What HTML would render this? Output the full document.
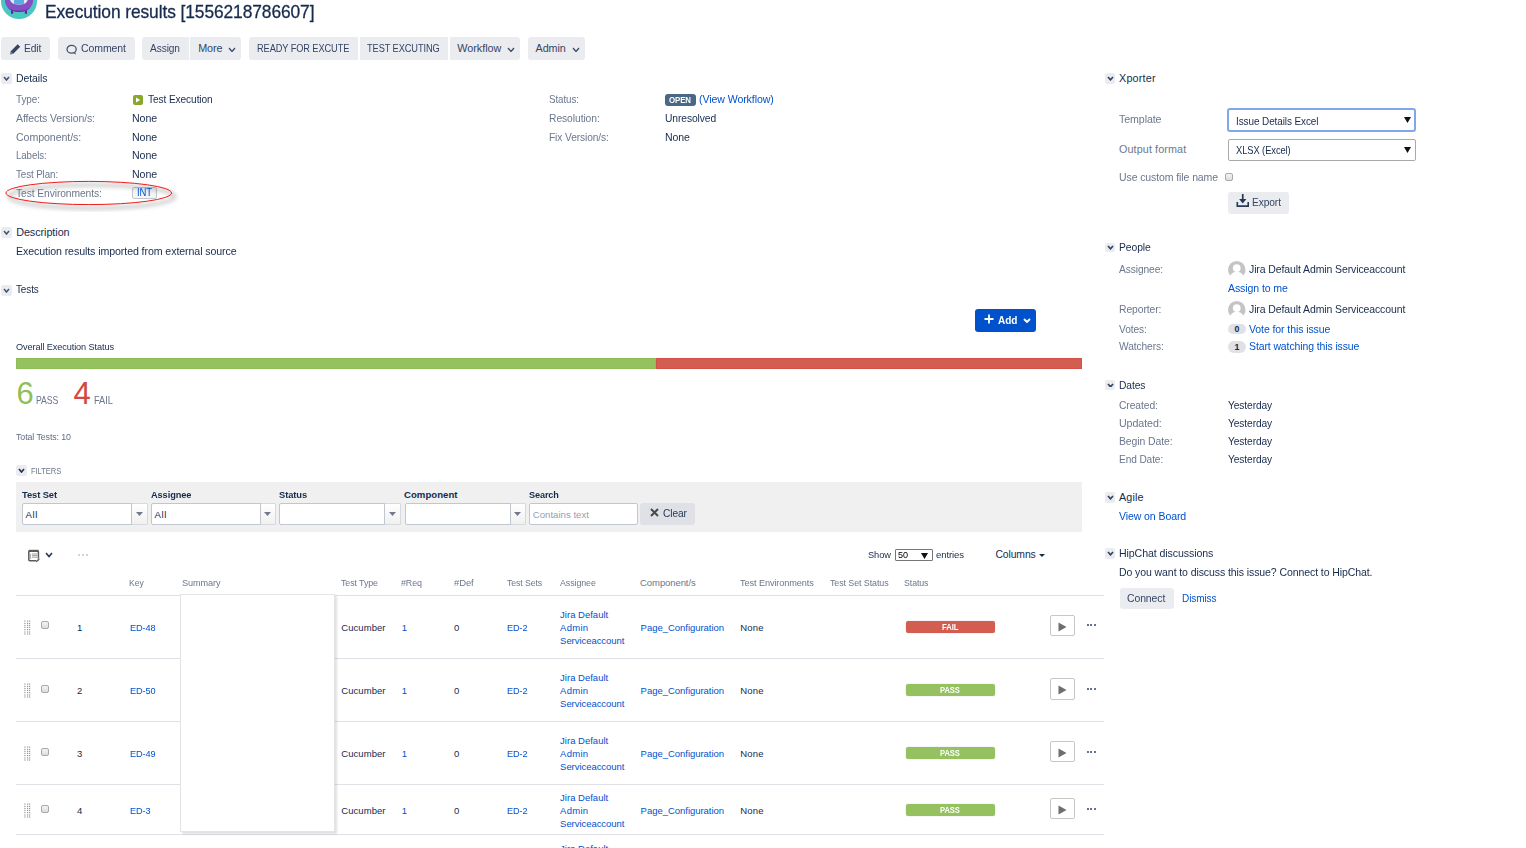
<!DOCTYPE html>
<html><head><meta charset="utf-8"><title>Execution results</title>
<style>
html,body{margin:0;padding:0;background:#fff;width:1526px;height:848px;overflow:hidden;position:relative}
body{font-family:"Liberation Sans",sans-serif}
.t{position:absolute;white-space:nowrap}
</style></head><body>
<svg style="position:absolute;left:0;top:0" width="40" height="22" viewBox="0 0 40 22">
<circle cx="19" cy="1" r="18" fill="#4BC6C3"/>
<path d="M11 9.5 h2.2 v4.3 h-2.2z M24.8 9.5 h2.2 v4.3 h-2.2z" fill="#5B2A9E"/>
<path d="M4.9 0 C5 6.5 9.5 11.9 19 11.9 C28.5 11.9 33 6.5 33.1 0 Z" fill="#8650C4"/>
<path d="M7.5 7.2 C10.5 10.6 14 11.9 19 11.9 C24 11.9 27.5 10.6 30.5 7.2 C27.5 9.6 24 10.6 19 10.6 C14 10.6 10.5 9.6 7.5 7.2Z" fill="#6535A8"/>
<path d="M10 0 C11 3.2 14 4.5 19 4.5 C24 4.5 27 3.2 27.6 0Z" fill="#EAE6F4"/>
<path d="M14 0 L14 3.6 C15.5 4.9 22.5 4.9 24 3.6 L24 0Z" fill="#5AADE2"/>
</svg>
<div style="position:absolute;left:1px;top:37px;width:49px;height:23px;background:#EBECF0;border-radius:3px"></div>
<div style="position:absolute;left:58px;top:37px;width:76.69999999999999px;height:23px;background:#EBECF0;border-radius:3px"></div>
<div style="position:absolute;left:142.2px;top:37px;width:46.80000000000001px;height:23px;background:#EBECF0;border-radius:3px 0 0 3px"></div>
<div style="position:absolute;left:190px;top:37px;width:50.80000000000001px;height:23px;background:#EBECF0;border-radius:0 3px 3px 0"></div>
<div style="position:absolute;left:249.2px;top:37px;width:108.80000000000001px;height:23px;background:#EBECF0;border-radius:3px 0 0 3px"></div>
<div style="position:absolute;left:360px;top:37px;width:87.80000000000001px;height:23px;background:#EBECF0;border-radius:0"></div>
<div style="position:absolute;left:450px;top:37px;width:70px;height:23px;background:#EBECF0;border-radius:0 3px 3px 0"></div>
<div style="position:absolute;left:528px;top:37px;width:57px;height:23px;background:#EBECF0;border-radius:3px"></div>
<svg style="position:absolute;left:9px;top:43px" width="13" height="12" viewBox="0 0 13 12"><path d="M1.5 8.5 L8.7 1.3 L11.2 3.8 L4 11 Z" fill="#344563"/><path d="M1.5 8.5 L4 11 L0.9 11.6 Z" fill="#6B778C"/></svg>
<svg style="position:absolute;left:66px;top:43.6px" width="12" height="12" viewBox="0 0 12 12"><ellipse cx="5.6" cy="5.2" rx="4.6" ry="3.9" fill="none" stroke="#42526E" stroke-width="1.3"/><path d="M7.5 9 L10 10.8 L9.2 8" fill="#42526E"/></svg>
<svg style="position:absolute;left:228px;top:46.5px" width="8" height="5.5" viewBox="0 0 8 5.5"><path d="M1 1 L4.0 4.5 L7 1" fill="none" stroke="#42526E" stroke-width="1.4"/></svg>
<svg style="position:absolute;left:506.5px;top:46.5px" width="8" height="5.5" viewBox="0 0 8 5.5"><path d="M1 1 L4.0 4.5 L7 1" fill="none" stroke="#42526E" stroke-width="1.4"/></svg>
<svg style="position:absolute;left:571.5px;top:46.5px" width="8" height="5.5" viewBox="0 0 8 5.5"><path d="M1 1 L4.0 4.5 L7 1" fill="none" stroke="#42526E" stroke-width="1.4"/></svg>
<div style="position:absolute;left:1.3px;top:73px;width:10.5px;height:11px;background:#EBECF0;border-radius:2px"></div>
<svg style="position:absolute;left:3.3px;top:76.2px" width="7" height="5" viewBox="0 0 7 5"><path d="M1 1 L3.5 4 L6 1" fill="none" stroke="#42526E" stroke-width="1.5"/></svg>
<div style="position:absolute;left:1.2px;top:227px;width:10.5px;height:10.599999999999994px;background:#EBECF0;border-radius:2px"></div>
<svg style="position:absolute;left:3.2px;top:230.0px" width="7" height="5" viewBox="0 0 7 5"><path d="M1 1 L3.5 4 L6 1" fill="none" stroke="#42526E" stroke-width="1.5"/></svg>
<div style="position:absolute;left:1.2px;top:285.3px;width:10.5px;height:10.300000000000011px;background:#EBECF0;border-radius:2px"></div>
<svg style="position:absolute;left:3.2px;top:288.15000000000003px" width="7" height="5" viewBox="0 0 7 5"><path d="M1 1 L3.5 4 L6 1" fill="none" stroke="#42526E" stroke-width="1.5"/></svg>
<div style="position:absolute;left:133px;top:95px;width:10px;height:10px;background:#8AA62C;border-radius:2px"></div>
<svg style="position:absolute;left:133px;top:95px" width="10" height="10" viewBox="0 0 10 10"><path d="M3 2.6 L7.2 5 L3 7.4Z" fill="#fff"/></svg>
<div style="position:absolute;left:132.3px;top:186.9px;width:24.599999999999994px;height:11.799999999999983px;background:#F4F5F7;border:1px solid #C1C7D0;border-radius:2px;box-sizing:border-box"></div>
<div style="position:absolute;left:665px;top:94px;width:30.700000000000045px;height:11.799999999999997px;background:#4A6785;border-radius:3px"></div>
<svg style="position:absolute;left:0;top:176px" width="185" height="36" viewBox="0 0 185 36">
<defs><filter id="sh" x="-10%" y="-30%" width="130%" height="180%"><feGaussianBlur stdDeviation="1.9"/></filter></defs>
<ellipse cx="91.8" cy="20.6" rx="82.8" ry="11.6" fill="none" stroke="rgba(0,0,0,0.28)" stroke-width="2.6" filter="url(#sh)"/>
<ellipse cx="88.75" cy="17" rx="82.8" ry="11.6" fill="none" stroke="#F21C1C" stroke-width="1.0"/>
</svg>
<div style="position:absolute;left:975px;top:309px;width:61px;height:23px;background:#0052CC;border-radius:3px"></div>
<svg style="position:absolute;left:984px;top:313.5px" width="10" height="10" viewBox="0 0 10 10"><path d="M5 0.5 V9.5 M0.5 5 H9.5" stroke="#fff" stroke-width="1.8"/></svg>
<svg style="position:absolute;left:1022.6px;top:317.6px" width="8" height="5.0" viewBox="0 0 8 5.0"><path d="M1 1 L4.0 4.0 L7 1" fill="none" stroke="#fff" stroke-width="1.9"/></svg>
<div style="position:absolute;left:16px;top:358px;width:640px;height:11px;background:#95C160;box-shadow:inset 0 0 0 1px #8DBD55"></div>
<div style="position:absolute;left:656px;top:358px;width:426px;height:11px;background:#D45D52;box-shadow:inset 0 0 0 1px #D2524A"></div>
<div style="position:absolute;left:16.2px;top:465px;width:10.5px;height:10.699999999999989px;background:#EBECF0;border-radius:2px"></div>
<svg style="position:absolute;left:18.4px;top:468.2px" width="7" height="5" viewBox="0 0 7 5"><path d="M1 1 L3.5 4 L6 1" fill="none" stroke="#253858" stroke-width="1.7"/></svg>
<div style="position:absolute;left:16px;top:482px;width:1066px;height:50px;background:#F0F0F0"></div>
<div style="position:absolute;left:21.5px;top:503px;width:126.0px;height:21.5px;background:#fff;border:1px solid #C1C7D0;border-radius:2px;box-sizing:border-box"></div>
<div style="position:absolute;left:130.5px;top:503px;width:17.0px;height:21.5px;background:linear-gradient(#fff,#F0F0F0);border:1px solid #D6D9DF;border-left-color:#C1C7D0;border-radius:0 2px 2px 0;box-sizing:border-box"></div>
<svg style="position:absolute;left:135.5px;top:512px" width="7" height="4" viewBox="0 0 7 4"><path d="M0 0 H7 L3.5 4Z" fill="#707A8A"/></svg>
<div style="position:absolute;left:150.5px;top:503px;width:125.60000000000002px;height:21.5px;background:#fff;border:1px solid #C1C7D0;border-radius:2px;box-sizing:border-box"></div>
<div style="position:absolute;left:259.6px;top:503px;width:16.5px;height:21.5px;background:linear-gradient(#fff,#F0F0F0);border:1px solid #D6D9DF;border-left-color:#C1C7D0;border-radius:0 2px 2px 0;box-sizing:border-box"></div>
<svg style="position:absolute;left:264.35px;top:512px" width="7" height="4" viewBox="0 0 7 4"><path d="M0 0 H7 L3.5 4Z" fill="#707A8A"/></svg>
<div style="position:absolute;left:279.4px;top:503px;width:121.60000000000002px;height:21.5px;background:#fff;border:1px solid #C1C7D0;border-radius:2px;box-sizing:border-box"></div>
<div style="position:absolute;left:384.4px;top:503px;width:16.600000000000023px;height:21.5px;background:linear-gradient(#fff,#F0F0F0);border:1px solid #D6D9DF;border-left-color:#C1C7D0;border-radius:0 2px 2px 0;box-sizing:border-box"></div>
<svg style="position:absolute;left:389.2px;top:512px" width="7" height="4" viewBox="0 0 7 4"><path d="M0 0 H7 L3.5 4Z" fill="#707A8A"/></svg>
<div style="position:absolute;left:404.5px;top:503px;width:121.5px;height:21.5px;background:#fff;border:1px solid #C1C7D0;border-radius:2px;box-sizing:border-box"></div>
<div style="position:absolute;left:509.7px;top:503px;width:16.30000000000001px;height:21.5px;background:linear-gradient(#fff,#F0F0F0);border:1px solid #D6D9DF;border-left-color:#C1C7D0;border-radius:0 2px 2px 0;box-sizing:border-box"></div>
<svg style="position:absolute;left:514.35px;top:512px" width="7" height="4" viewBox="0 0 7 4"><path d="M0 0 H7 L3.5 4Z" fill="#707A8A"/></svg>
<div style="position:absolute;left:529.3px;top:503px;width:109.20000000000005px;height:21.5px;background:#fff;border:1px solid #C1C7D0;border-radius:2px;box-sizing:border-box"></div>
<div style="position:absolute;left:640.3px;top:503.2px;width:54.40000000000009px;height:21.400000000000034px;background:#DFE1E6;border-radius:3px"></div>
<svg style="position:absolute;left:649.5px;top:507.6px" width="9" height="9" viewBox="0 0 9 9"><path d="M1 1 L8 8 M8 1 L1 8" stroke="#4A4A4A" stroke-width="2"/></svg>
<svg style="position:absolute;left:27px;top:549px" width="14" height="14" viewBox="0 0 14 14">
<rect x="1.8" y="1.8" width="9.6" height="10" rx="1" fill="none" stroke="#5A5A5A" stroke-width="1.5"/>
<path d="M1.8 1.9 H11.4" stroke="#5A5A5A" stroke-width="2.2"/>
<path d="M3.6 4.8 V10" stroke="#A0A0A0" stroke-width="0.9"/>
<path d="M5 5 H10 M5 6.6 H10 M5 8.2 H10" stroke="#A0A0A0" stroke-width="1"/>
<path d="M8.2 12.8 L12.2 8.8 L13.2 9.8 L9.2 13.6Z" fill="#fff"/>
<path d="M8.6 12.6 L12.2 9.2 L12.9 9.9 L9.3 13.2Z" fill="#555"/>
</svg>
<svg style="position:absolute;left:45px;top:552px" width="8" height="5.6" viewBox="0 0 8 5.6"><path d="M1 1 L4.0 4.6 L7 1" fill="none" stroke="#253858" stroke-width="1.6"/></svg>
<div style="position:absolute;left:77.5px;top:554px;width:2.0px;height:2px;background:#C1C7D0;border-radius:1px"></div>
<div style="position:absolute;left:81.5px;top:554px;width:2.0px;height:2px;background:#C1C7D0;border-radius:1px"></div>
<div style="position:absolute;left:85.5px;top:554px;width:2.0px;height:2px;background:#C1C7D0;border-radius:1px"></div>
<div style="position:absolute;left:895.1px;top:549.2px;width:37.60000000000002px;height:11.399999999999977px;background:#fff;border:1px solid #777;border-radius:1px;box-sizing:border-box"></div>
<svg style="position:absolute;left:921px;top:552.5px" width="7" height="6" viewBox="0 0 7 6"><path d="M0 0 H7 L3.5 6Z" fill="#111"/></svg>
<svg style="position:absolute;left:1038.9px;top:553.8px" width="6" height="3" viewBox="0 0 6 3"><path d="M0 0 H6 L3 3Z" fill="#172B4D"/></svg>
<div style="position:absolute;left:16px;top:594.6px;width:1088.4px;height:1.6000000000000227px;background:#DFE1E6"></div>
<div style="position:absolute;left:16px;top:657.8px;width:1088.4px;height:1.2000000000000455px;background:#DFE1E6"></div>
<div style="position:absolute;left:16px;top:720.6999999999999px;width:1088.4px;height:1.2000000000000455px;background:#DFE1E6"></div>
<div style="position:absolute;left:16px;top:783.8px;width:1088.4px;height:1.2000000000000455px;background:#DFE1E6"></div>
<div style="position:absolute;left:16px;top:833.9px;width:1088.4px;height:1.2000000000000455px;background:#DFE1E6"></div>
<svg style="position:absolute;left:24px;top:620px" width="7" height="15" viewBox="0 0 7 15" fill="#9A9A9A"><rect x="0.3" y="0.5" width="1.2" height="1.2"/><rect x="0.3" y="2.8" width="1.2" height="1.2"/><rect x="0.3" y="4.8" width="1.2" height="1.2"/><rect x="0.3" y="6.8" width="1.2" height="1.2"/><rect x="0.3" y="9" width="1.2" height="1.2"/><rect x="0.3" y="11.4" width="1.2" height="1.2"/><rect x="0.3" y="13.4" width="1.2" height="1.2"/><rect x="3" y="0.5" width="1.2" height="1.2"/><rect x="3" y="2.8" width="1.2" height="1.2"/><rect x="3" y="4.8" width="1.2" height="1.2"/><rect x="3" y="6.8" width="1.2" height="1.2"/><rect x="3" y="9" width="1.2" height="1.2"/><rect x="3" y="11.4" width="1.2" height="1.2"/><rect x="3" y="13.4" width="1.2" height="1.2"/><rect x="5" y="0.5" width="1.2" height="1.2"/><rect x="5" y="2.8" width="1.2" height="1.2"/><rect x="5" y="4.8" width="1.2" height="1.2"/><rect x="5" y="6.8" width="1.2" height="1.2"/><rect x="5" y="9" width="1.2" height="1.2"/><rect x="5" y="11.4" width="1.2" height="1.2"/><rect x="5" y="13.4" width="1.2" height="1.2"/></svg>
<div style="position:absolute;left:41.1px;top:621.2px;width:7.899999999999999px;height:8.099999999999909px;background:linear-gradient(#F4F4F4,#DDD);border:1px solid #A8A8A8;border-radius:2px;box-sizing:border-box"></div>
<div style="position:absolute;left:906px;top:620.9px;width:89px;height:12.100000000000023px;background:#D45D52;border-radius:2px;box-shadow:0 0 0 0.5px rgba(0,0,0,0.08)"></div>
<div style="position:absolute;left:1050.3px;top:614.8px;width:24.40000000000009px;height:21.40000000000009px;background:#fff;border:1px solid #C8C8C8;border-radius:2px;box-sizing:border-box"></div>
<svg style="position:absolute;left:1058px;top:621.6px" width="9" height="10" viewBox="0 0 9 10"><path d="M0.5 0.5 L8.5 5 L0.5 9.5Z" fill="#6E6E6E"/></svg>
<div style="position:absolute;left:1086.6px;top:624.4px;width:2.0px;height:2.0px;background:#344563;border-radius:1px"></div>
<div style="position:absolute;left:1090.3px;top:624.4px;width:2.0px;height:2.0px;background:#344563;border-radius:1px"></div>
<div style="position:absolute;left:1094.0px;top:624.4px;width:2.0px;height:2.0px;background:#344563;border-radius:1px"></div>
<svg style="position:absolute;left:24px;top:683.4px" width="7" height="15" viewBox="0 0 7 15" fill="#9A9A9A"><rect x="0.3" y="0.5" width="1.2" height="1.2"/><rect x="0.3" y="2.8" width="1.2" height="1.2"/><rect x="0.3" y="4.8" width="1.2" height="1.2"/><rect x="0.3" y="6.8" width="1.2" height="1.2"/><rect x="0.3" y="9" width="1.2" height="1.2"/><rect x="0.3" y="11.4" width="1.2" height="1.2"/><rect x="0.3" y="13.4" width="1.2" height="1.2"/><rect x="3" y="0.5" width="1.2" height="1.2"/><rect x="3" y="2.8" width="1.2" height="1.2"/><rect x="3" y="4.8" width="1.2" height="1.2"/><rect x="3" y="6.8" width="1.2" height="1.2"/><rect x="3" y="9" width="1.2" height="1.2"/><rect x="3" y="11.4" width="1.2" height="1.2"/><rect x="3" y="13.4" width="1.2" height="1.2"/><rect x="5" y="0.5" width="1.2" height="1.2"/><rect x="5" y="2.8" width="1.2" height="1.2"/><rect x="5" y="4.8" width="1.2" height="1.2"/><rect x="5" y="6.8" width="1.2" height="1.2"/><rect x="5" y="9" width="1.2" height="1.2"/><rect x="5" y="11.4" width="1.2" height="1.2"/><rect x="5" y="13.4" width="1.2" height="1.2"/></svg>
<div style="position:absolute;left:41.1px;top:684.6px;width:7.899999999999999px;height:8.099999999999909px;background:linear-gradient(#F4F4F4,#DDD);border:1px solid #A8A8A8;border-radius:2px;box-sizing:border-box"></div>
<div style="position:absolute;left:906px;top:684.3px;width:89px;height:12.100000000000023px;background:#95C160;border-radius:2px;box-shadow:0 0 0 0.5px rgba(0,0,0,0.08)"></div>
<div style="position:absolute;left:1050.3px;top:678.1999999999999px;width:24.40000000000009px;height:21.40000000000009px;background:#fff;border:1px solid #C8C8C8;border-radius:2px;box-sizing:border-box"></div>
<svg style="position:absolute;left:1058px;top:685.0px" width="9" height="10" viewBox="0 0 9 10"><path d="M0.5 0.5 L8.5 5 L0.5 9.5Z" fill="#6E6E6E"/></svg>
<div style="position:absolute;left:1086.6px;top:687.8px;width:2.0px;height:2.0px;background:#344563;border-radius:1px"></div>
<div style="position:absolute;left:1090.3px;top:687.8px;width:2.0px;height:2.0px;background:#344563;border-radius:1px"></div>
<div style="position:absolute;left:1094.0px;top:687.8px;width:2.0px;height:2.0px;background:#344563;border-radius:1px"></div>
<svg style="position:absolute;left:24px;top:746.3px" width="7" height="15" viewBox="0 0 7 15" fill="#9A9A9A"><rect x="0.3" y="0.5" width="1.2" height="1.2"/><rect x="0.3" y="2.8" width="1.2" height="1.2"/><rect x="0.3" y="4.8" width="1.2" height="1.2"/><rect x="0.3" y="6.8" width="1.2" height="1.2"/><rect x="0.3" y="9" width="1.2" height="1.2"/><rect x="0.3" y="11.4" width="1.2" height="1.2"/><rect x="0.3" y="13.4" width="1.2" height="1.2"/><rect x="3" y="0.5" width="1.2" height="1.2"/><rect x="3" y="2.8" width="1.2" height="1.2"/><rect x="3" y="4.8" width="1.2" height="1.2"/><rect x="3" y="6.8" width="1.2" height="1.2"/><rect x="3" y="9" width="1.2" height="1.2"/><rect x="3" y="11.4" width="1.2" height="1.2"/><rect x="3" y="13.4" width="1.2" height="1.2"/><rect x="5" y="0.5" width="1.2" height="1.2"/><rect x="5" y="2.8" width="1.2" height="1.2"/><rect x="5" y="4.8" width="1.2" height="1.2"/><rect x="5" y="6.8" width="1.2" height="1.2"/><rect x="5" y="9" width="1.2" height="1.2"/><rect x="5" y="11.4" width="1.2" height="1.2"/><rect x="5" y="13.4" width="1.2" height="1.2"/></svg>
<div style="position:absolute;left:41.1px;top:747.5px;width:7.899999999999999px;height:8.099999999999909px;background:linear-gradient(#F4F4F4,#DDD);border:1px solid #A8A8A8;border-radius:2px;box-sizing:border-box"></div>
<div style="position:absolute;left:906px;top:747.1999999999999px;width:89px;height:12.100000000000023px;background:#95C160;border-radius:2px;box-shadow:0 0 0 0.5px rgba(0,0,0,0.08)"></div>
<div style="position:absolute;left:1050.3px;top:741.0999999999999px;width:24.40000000000009px;height:21.40000000000009px;background:#fff;border:1px solid #C8C8C8;border-radius:2px;box-sizing:border-box"></div>
<svg style="position:absolute;left:1058px;top:747.9px" width="9" height="10" viewBox="0 0 9 10"><path d="M0.5 0.5 L8.5 5 L0.5 9.5Z" fill="#6E6E6E"/></svg>
<div style="position:absolute;left:1086.6px;top:750.6999999999999px;width:2.0px;height:2.0px;background:#344563;border-radius:1px"></div>
<div style="position:absolute;left:1090.3px;top:750.6999999999999px;width:2.0px;height:2.0px;background:#344563;border-radius:1px"></div>
<div style="position:absolute;left:1094.0px;top:750.6999999999999px;width:2.0px;height:2.0px;background:#344563;border-radius:1px"></div>
<svg style="position:absolute;left:24px;top:803.3px" width="7" height="15" viewBox="0 0 7 15" fill="#9A9A9A"><rect x="0.3" y="0.5" width="1.2" height="1.2"/><rect x="0.3" y="2.8" width="1.2" height="1.2"/><rect x="0.3" y="4.8" width="1.2" height="1.2"/><rect x="0.3" y="6.8" width="1.2" height="1.2"/><rect x="0.3" y="9" width="1.2" height="1.2"/><rect x="0.3" y="11.4" width="1.2" height="1.2"/><rect x="0.3" y="13.4" width="1.2" height="1.2"/><rect x="3" y="0.5" width="1.2" height="1.2"/><rect x="3" y="2.8" width="1.2" height="1.2"/><rect x="3" y="4.8" width="1.2" height="1.2"/><rect x="3" y="6.8" width="1.2" height="1.2"/><rect x="3" y="9" width="1.2" height="1.2"/><rect x="3" y="11.4" width="1.2" height="1.2"/><rect x="3" y="13.4" width="1.2" height="1.2"/><rect x="5" y="0.5" width="1.2" height="1.2"/><rect x="5" y="2.8" width="1.2" height="1.2"/><rect x="5" y="4.8" width="1.2" height="1.2"/><rect x="5" y="6.8" width="1.2" height="1.2"/><rect x="5" y="9" width="1.2" height="1.2"/><rect x="5" y="11.4" width="1.2" height="1.2"/><rect x="5" y="13.4" width="1.2" height="1.2"/></svg>
<div style="position:absolute;left:41.1px;top:804.5px;width:7.899999999999999px;height:8.099999999999909px;background:linear-gradient(#F4F4F4,#DDD);border:1px solid #A8A8A8;border-radius:2px;box-sizing:border-box"></div>
<div style="position:absolute;left:906px;top:804.1999999999999px;width:89px;height:12.100000000000023px;background:#95C160;border-radius:2px;box-shadow:0 0 0 0.5px rgba(0,0,0,0.08)"></div>
<div style="position:absolute;left:1050.3px;top:798.0999999999999px;width:24.40000000000009px;height:21.40000000000009px;background:#fff;border:1px solid #C8C8C8;border-radius:2px;box-sizing:border-box"></div>
<svg style="position:absolute;left:1058px;top:804.9px" width="9" height="10" viewBox="0 0 9 10"><path d="M0.5 0.5 L8.5 5 L0.5 9.5Z" fill="#6E6E6E"/></svg>
<div style="position:absolute;left:1086.6px;top:807.6999999999999px;width:2.0px;height:2.0px;background:#344563;border-radius:1px"></div>
<div style="position:absolute;left:1090.3px;top:807.6999999999999px;width:2.0px;height:2.0px;background:#344563;border-radius:1px"></div>
<div style="position:absolute;left:1094.0px;top:807.6999999999999px;width:2.0px;height:2.0px;background:#344563;border-radius:1px"></div>
<div style="position:absolute;left:179.5px;top:594.2px;width:155.3px;height:237.79999999999995px;background:#fff;border:1px solid #E4E4E4;box-sizing:border-box;box-shadow:2px 2px 2px rgba(0,0,0,0.12)"></div>
<div style="position:absolute;left:1105.3px;top:73.4px;width:9.5px;height:10.199999999999989px;background:#EBECF0;border-radius:2px"></div>
<svg style="position:absolute;left:1106.8px;top:75.9px" width="7" height="4.8" viewBox="0 0 7 4.8"><path d="M1 1 L3.5 3.8 L6 1" fill="none" stroke="#344563" stroke-width="1.7"/></svg>
<div style="position:absolute;left:1227.2px;top:108.2px;width:189.0999999999999px;height:23.499999999999986px;background:#fff;border:2px solid #7FA8E8;border-radius:3px;box-sizing:border-box"></div>
<svg style="position:absolute;left:1403.8px;top:116.6px" width="7" height="6" viewBox="0 0 7 6"><path d="M0 0 H7 L3.5 6Z" fill="#111"/></svg>
<div style="position:absolute;left:1228px;top:138.6px;width:188px;height:22.099999999999994px;background:#fff;border:1px solid #A9A9A9;border-radius:2px;box-sizing:border-box"></div>
<svg style="position:absolute;left:1403.8px;top:146.6px" width="7" height="6" viewBox="0 0 7 6"><path d="M0 0 H7 L3.5 6Z" fill="#111"/></svg>
<div style="position:absolute;left:1225.2px;top:172.8px;width:8.0px;height:8.0px;background:linear-gradient(#F4F4F4,#DDD);border:1px solid #A8A8A8;border-radius:2px;box-sizing:border-box"></div>
<div style="position:absolute;left:1228px;top:192.1px;width:60.90000000000009px;height:21.700000000000017px;background:#EBECF0;border-radius:3px"></div>
<svg style="position:absolute;left:1236px;top:193px" width="14" height="15" viewBox="0 0 14 15"><rect x="5.9" y="1" width="1.7" height="6" fill="#253858"/><path d="M3.1 5.9 H10.4 L6.75 10.4Z" fill="#253858"/><path d="M1.3 9 V13.1 H12.2 V9" fill="none" stroke="#253858" stroke-width="1.6"/></svg>
<div style="position:absolute;left:1105.3px;top:243px;width:9.5px;height:9px;background:#EBECF0;border-radius:2px"></div>
<svg style="position:absolute;left:1106.8px;top:244.9px" width="7" height="4.8" viewBox="0 0 7 4.8"><path d="M1 1 L3.5 3.8 L6 1" fill="none" stroke="#344563" stroke-width="1.7"/></svg>
<svg style="position:absolute;left:1228px;top:260.7px" width="17.5" height="17.5" viewBox="0 0 18 18">
<circle cx="9" cy="9" r="9" fill="#C4C4C4"/><circle cx="9" cy="7.3" r="4" fill="#fff"/><path d="M2.2 15.4 C3.6 12.2 6 11 9 11 C12 11 14.4 12.2 15.8 15.4 L16 18.5 L2 18.5Z" fill="#fff"/></svg>
<svg style="position:absolute;left:1228px;top:300.8px" width="17.5" height="17.5" viewBox="0 0 18 18">
<circle cx="9" cy="9" r="9" fill="#C4C4C4"/><circle cx="9" cy="7.3" r="4" fill="#fff"/><path d="M2.2 15.4 C3.6 12.2 6 11 9 11 C12 11 14.4 12.2 15.8 15.4 L16 18.5 L2 18.5Z" fill="#fff"/></svg>
<div style="position:absolute;left:1228px;top:323.7px;width:17.700000000000045px;height:10.800000000000011px;background:#DFE1E6;border-radius:6px"></div>
<div style="position:absolute;left:1228px;top:340.9px;width:17.700000000000045px;height:11.800000000000011px;background:#DFE1E6;border-radius:6px"></div>
<div style="position:absolute;left:1105.3px;top:380.3px;width:9.5px;height:9.699999999999989px;background:#EBECF0;border-radius:2px"></div>
<svg style="position:absolute;left:1106.8px;top:382.54999999999995px" width="7" height="4.8" viewBox="0 0 7 4.8"><path d="M1 1 L3.5 3.8 L6 1" fill="none" stroke="#344563" stroke-width="1.7"/></svg>
<div style="position:absolute;left:1105.3px;top:492.3px;width:9.5px;height:10.399999999999977px;background:#EBECF0;border-radius:2px"></div>
<svg style="position:absolute;left:1106.8px;top:494.9px" width="7" height="4.8" viewBox="0 0 7 4.8"><path d="M1 1 L3.5 3.8 L6 1" fill="none" stroke="#344563" stroke-width="1.7"/></svg>
<div style="position:absolute;left:1105.3px;top:548.4px;width:9.5px;height:10.300000000000068px;background:#EBECF0;border-radius:2px"></div>
<svg style="position:absolute;left:1106.8px;top:550.9499999999999px" width="7" height="4.8" viewBox="0 0 7 4.8"><path d="M1 1 L3.5 3.8 L6 1" fill="none" stroke="#344563" stroke-width="1.7"/></svg>
<div style="position:absolute;left:1120.1px;top:588.2px;width:53.90000000000009px;height:21.199999999999932px;background:#EBECF0;border-radius:3px"></div>
<div class="t" style="left:44.50px;top:3.00px;font-size:18.4px;line-height:18.4px;color:#172B4D;font-weight:400;letter-spacing:-0.100px;-webkit-text-stroke:0.3px #172B4D;transform:scaleX(0.9452);transform-origin:0 0;">Execution results [1556218786607]</div>
<div class="t" style="left:24.10px;top:42.80px;font-size:10.8px;line-height:10.8px;color:#344563;font-weight:400;letter-spacing:-0.100px;transform:scaleX(0.9506);transform-origin:0 0;">Edit</div>
<div class="t" style="left:80.60px;top:42.80px;font-size:10.8px;line-height:10.8px;color:#344563;font-weight:400;letter-spacing:-0.100px;transform:scaleX(0.9741);transform-origin:0 0;">Comment</div>
<div class="t" style="left:150.30px;top:42.80px;font-size:10.8px;line-height:10.8px;color:#344563;font-weight:400;letter-spacing:-0.100px;transform:scaleX(0.9402);transform-origin:0 0;">Assign</div>
<div class="t" style="left:198.20px;top:42.80px;font-size:10.8px;line-height:10.8px;color:#344563;font-weight:400;letter-spacing:-0.100px;">More</div>
<div class="t" style="left:257.10px;top:43.80px;font-size:10.2px;line-height:10.2px;color:#344563;font-weight:400;letter-spacing:-0.100px;transform:scaleX(0.9061);transform-origin:0 0;">READY FOR EXCUTE</div>
<div class="t" style="left:366.80px;top:43.80px;font-size:10.2px;line-height:10.2px;color:#344563;font-weight:400;letter-spacing:-0.100px;transform:scaleX(0.9078);transform-origin:0 0;">TEST EXCUTING</div>
<div class="t" style="left:457.30px;top:42.80px;font-size:10.8px;line-height:10.8px;color:#344563;font-weight:400;letter-spacing:-0.013px;">Workflow</div>
<div class="t" style="left:535.50px;top:42.80px;font-size:10.8px;line-height:10.8px;color:#344563;font-weight:400;letter-spacing:-0.076px;">Admin</div>
<div class="t" style="left:16.30px;top:72.90px;font-size:10.8px;line-height:10.8px;color:#172B4D;font-weight:400;letter-spacing:-0.100px;transform:scaleX(0.9691);transform-origin:0 0;">Details</div>
<div class="t" style="left:16.20px;top:226.80px;font-size:10.8px;line-height:10.8px;color:#172B4D;font-weight:400;letter-spacing:-0.061px;">Description</div>
<div class="t" style="left:16.20px;top:284.30px;font-size:10.8px;line-height:10.8px;color:#172B4D;font-weight:400;letter-spacing:-0.100px;transform:scaleX(0.9194);transform-origin:0 0;">Tests</div>
<div class="t" style="left:16.00px;top:93.90px;font-size:10.8px;line-height:10.8px;color:#6B778C;font-weight:400;letter-spacing:-0.100px;transform:scaleX(0.9228);transform-origin:0 0;">Type:</div>
<div class="t" style="left:16.00px;top:112.60px;font-size:10.8px;line-height:10.8px;color:#6B778C;font-weight:400;letter-spacing:-0.100px;transform:scaleX(0.9691);transform-origin:0 0;">Affects Version/s:</div>
<div class="t" style="left:16.00px;top:131.90px;font-size:10.8px;line-height:10.8px;color:#6B778C;font-weight:400;letter-spacing:-0.100px;transform:scaleX(0.9861);transform-origin:0 0;">Component/s:</div>
<div class="t" style="left:16.00px;top:149.90px;font-size:10.8px;line-height:10.8px;color:#6B778C;font-weight:400;letter-spacing:-0.100px;transform:scaleX(0.8972);transform-origin:0 0;">Labels:</div>
<div class="t" style="left:16.00px;top:168.70px;font-size:10.8px;line-height:10.8px;color:#6B778C;font-weight:400;letter-spacing:-0.100px;transform:scaleX(0.9052);transform-origin:0 0;">Test Plan:</div>
<div class="t" style="left:16.00px;top:187.60px;font-size:10.8px;line-height:10.8px;color:#6B778C;font-weight:400;letter-spacing:-0.100px;transform:scaleX(0.9533);transform-origin:0 0;">Test Environments:</div>
<div class="t" style="left:147.60px;top:94.00px;font-size:10.8px;line-height:10.8px;color:#172B4D;font-weight:400;letter-spacing:-0.100px;transform:scaleX(0.9388);transform-origin:0 0;">Test Execution</div>
<div class="t" style="left:132.30px;top:112.60px;font-size:10.8px;line-height:10.8px;color:#172B4D;font-weight:400;letter-spacing:-0.100px;transform:scaleX(0.9839);transform-origin:0 0;">None</div>
<div class="t" style="left:132.30px;top:131.90px;font-size:10.8px;line-height:10.8px;color:#172B4D;font-weight:400;letter-spacing:-0.100px;transform:scaleX(0.9839);transform-origin:0 0;">None</div>
<div class="t" style="left:132.30px;top:149.90px;font-size:10.8px;line-height:10.8px;color:#172B4D;font-weight:400;letter-spacing:-0.100px;transform:scaleX(0.9839);transform-origin:0 0;">None</div>
<div class="t" style="left:132.30px;top:168.70px;font-size:10.8px;line-height:10.8px;color:#172B4D;font-weight:400;letter-spacing:-0.100px;transform:scaleX(0.9839);transform-origin:0 0;">None</div>
<div class="t" style="left:137.00px;top:187.40px;font-size:10.8px;line-height:10.8px;color:#0052CC;font-weight:400;letter-spacing:-0.100px;transform:scaleX(0.8841);transform-origin:0 0;">INT</div>
<div class="t" style="left:548.90px;top:94.30px;font-size:10.8px;line-height:10.8px;color:#6B778C;font-weight:400;letter-spacing:-0.100px;transform:scaleX(0.9058);transform-origin:0 0;">Status:</div>
<div class="t" style="left:548.90px;top:112.80px;font-size:10.8px;line-height:10.8px;color:#6B778C;font-weight:400;letter-spacing:-0.100px;transform:scaleX(0.9582);transform-origin:0 0;">Resolution:</div>
<div class="t" style="left:548.90px;top:131.70px;font-size:10.8px;line-height:10.8px;color:#6B778C;font-weight:400;letter-spacing:-0.100px;transform:scaleX(0.9417);transform-origin:0 0;">Fix Version/s:</div>
<div class="t" style="left:669.30px;top:96.60px;font-size:8.2px;line-height:8.2px;color:#fff;font-weight:700;letter-spacing:-0.100px;transform:scaleX(0.9606);transform-origin:0 0;">OPEN</div>
<div class="t" style="left:699.10px;top:94.30px;font-size:10.8px;line-height:10.8px;color:#0052CC;font-weight:400;letter-spacing:-0.100px;transform:scaleX(0.9817);transform-origin:0 0;">(View Workflow)</div>
<div class="t" style="left:665.30px;top:112.80px;font-size:10.8px;line-height:10.8px;color:#172B4D;font-weight:400;letter-spacing:-0.100px;transform:scaleX(0.9532);transform-origin:0 0;">Unresolved</div>
<div class="t" style="left:665.30px;top:131.70px;font-size:10.8px;line-height:10.8px;color:#172B4D;font-weight:400;letter-spacing:-0.100px;transform:scaleX(0.9760);transform-origin:0 0;">None</div>
<div class="t" style="left:16.10px;top:245.90px;font-size:10.8px;line-height:10.8px;color:#172B4D;font-weight:400;letter-spacing:-0.100px;transform:scaleX(0.9851);transform-origin:0 0;">Execution results imported from external source</div>
<div class="t" style="left:997.80px;top:315.30px;font-size:10.8px;line-height:10.8px;color:#fff;font-weight:700;letter-spacing:-0.100px;transform:scaleX(0.9284);transform-origin:0 0;">Add</div>
<div class="t" style="left:15.70px;top:342.90px;font-size:9.3px;line-height:9.3px;color:#172B4D;font-weight:400;letter-spacing:-0.100px;transform:scaleX(0.9849);transform-origin:0 0;">Overall Execution Status</div>
<div class="t" style="left:16.40px;top:377.80px;font-size:31px;line-height:31px;color:#8FBE5B;font-weight:400;letter-spacing:0.000px;">6</div>
<div class="t" style="left:36.20px;top:395.50px;font-size:10.2px;line-height:10.2px;color:#6B778C;font-weight:400;letter-spacing:-0.100px;transform:scaleX(0.8537);transform-origin:0 0;">PASS</div>
<div class="t" style="left:73.50px;top:377.80px;font-size:31px;line-height:31px;color:#D04A40;font-weight:400;letter-spacing:0.000px;">4</div>
<div class="t" style="left:94.20px;top:395.50px;font-size:10.2px;line-height:10.2px;color:#6B778C;font-weight:400;letter-spacing:-0.100px;transform:scaleX(0.9104);transform-origin:0 0;">FAIL</div>
<div class="t" style="left:15.70px;top:432.80px;font-size:9.3px;line-height:9.3px;color:#5E6C84;font-weight:400;letter-spacing:-0.100px;transform:scaleX(0.9513);transform-origin:0 0;">Total Tests: 10</div>
<div class="t" style="left:31.00px;top:466.80px;font-size:9.3px;line-height:9.3px;color:#6B778C;font-weight:400;letter-spacing:-0.100px;transform:scaleX(0.8176);transform-origin:0 0;">FILTERS</div>
<div class="t" style="left:21.50px;top:489.70px;font-size:9.6px;line-height:9.6px;color:#172B4D;font-weight:700;letter-spacing:-0.100px;transform:scaleX(0.9775);transform-origin:0 0;">Test Set</div>
<div class="t" style="left:150.50px;top:489.70px;font-size:9.6px;line-height:9.6px;color:#172B4D;font-weight:700;letter-spacing:-0.100px;transform:scaleX(0.9629);transform-origin:0 0;">Assignee</div>
<div class="t" style="left:279.30px;top:489.70px;font-size:9.6px;line-height:9.6px;color:#172B4D;font-weight:700;letter-spacing:-0.100px;transform:scaleX(0.9750);transform-origin:0 0;">Status</div>
<div class="t" style="left:404.00px;top:489.70px;font-size:9.6px;line-height:9.6px;color:#172B4D;font-weight:700;letter-spacing:0.026px;">Component</div>
<div class="t" style="left:529.00px;top:489.70px;font-size:9.6px;line-height:9.6px;color:#172B4D;font-weight:700;letter-spacing:-0.100px;transform:scaleX(0.9492);transform-origin:0 0;">Search</div>
<div class="t" style="left:25.50px;top:509.90px;font-size:9.6px;line-height:9.6px;color:#172B4D;font-weight:400;letter-spacing:0.669px;">All</div>
<div class="t" style="left:154.50px;top:509.90px;font-size:9.6px;line-height:9.6px;color:#172B4D;font-weight:400;letter-spacing:0.669px;">All</div>
<div class="t" style="left:532.80px;top:509.90px;font-size:9.6px;line-height:9.6px;color:#97A0AF;font-weight:400;letter-spacing:0.009px;">Contains text</div>
<div class="t" style="left:662.50px;top:508.90px;font-size:10.4px;line-height:10.4px;color:#253858;font-weight:400;letter-spacing:-0.100px;transform:scaleX(0.9824);transform-origin:0 0;">Clear</div>
<div class="t" style="left:868.40px;top:549.70px;font-size:9.8px;line-height:9.8px;color:#172B4D;font-weight:400;letter-spacing:-0.100px;transform:scaleX(0.9460);transform-origin:0 0;">Show</div>
<div class="t" style="left:898.20px;top:550.00px;font-size:9.8px;line-height:9.8px;color:#000;font-weight:400;letter-spacing:-0.100px;transform:scaleX(0.9262);transform-origin:0 0;">50</div>
<div class="t" style="left:936.20px;top:549.70px;font-size:9.8px;line-height:9.8px;color:#172B4D;font-weight:400;letter-spacing:-0.100px;transform:scaleX(0.9755);transform-origin:0 0;">entries</div>
<div class="t" style="left:995.40px;top:549.70px;font-size:10.4px;line-height:10.4px;color:#172B4D;font-weight:400;letter-spacing:-0.100px;">Columns</div>
<div class="t" style="left:129.10px;top:577.90px;font-size:9.5px;line-height:9.5px;color:#6B778C;font-weight:400;letter-spacing:-0.100px;transform:scaleX(0.9091);transform-origin:0 0;">Key</div>
<div class="t" style="left:182.30px;top:577.90px;font-size:9.5px;line-height:9.5px;color:#6B778C;font-weight:400;letter-spacing:-0.100px;transform:scaleX(0.9614);transform-origin:0 0;">Summary</div>
<div class="t" style="left:341.30px;top:577.90px;font-size:9.5px;line-height:9.5px;color:#6B778C;font-weight:400;letter-spacing:-0.100px;transform:scaleX(0.9333);transform-origin:0 0;">Test Type</div>
<div class="t" style="left:400.80px;top:577.90px;font-size:9.5px;line-height:9.5px;color:#6B778C;font-weight:400;letter-spacing:-0.100px;transform:scaleX(0.9370);transform-origin:0 0;">#Req</div>
<div class="t" style="left:454.00px;top:577.90px;font-size:9.5px;line-height:9.5px;color:#6B778C;font-weight:400;letter-spacing:-0.100px;transform:scaleX(0.9966);transform-origin:0 0;">#Def</div>
<div class="t" style="left:507.20px;top:577.90px;font-size:9.5px;line-height:9.5px;color:#6B778C;font-weight:400;letter-spacing:-0.100px;transform:scaleX(0.9171);transform-origin:0 0;">Test Sets</div>
<div class="t" style="left:560.20px;top:577.90px;font-size:9.5px;line-height:9.5px;color:#6B778C;font-weight:400;letter-spacing:-0.100px;transform:scaleX(0.9354);transform-origin:0 0;">Assignee</div>
<div class="t" style="left:640.10px;top:577.90px;font-size:9.5px;line-height:9.5px;color:#6B778C;font-weight:400;letter-spacing:-0.090px;">Component/s</div>
<div class="t" style="left:740.30px;top:577.90px;font-size:9.5px;line-height:9.5px;color:#6B778C;font-weight:400;letter-spacing:-0.100px;transform:scaleX(0.9655);transform-origin:0 0;">Test Environments</div>
<div class="t" style="left:830.30px;top:577.90px;font-size:9.5px;line-height:9.5px;color:#6B778C;font-weight:400;letter-spacing:-0.100px;transform:scaleX(0.9377);transform-origin:0 0;">Test Set Status</div>
<div class="t" style="left:904.20px;top:577.90px;font-size:9.5px;line-height:9.5px;color:#6B778C;font-weight:400;letter-spacing:-0.100px;transform:scaleX(0.9269);transform-origin:0 0;">Status</div>
<div class="t" style="left:76.90px;top:623.00px;font-size:9.5px;line-height:9.5px;color:#172B4D;font-weight:400;letter-spacing:0.000px;">1</div>
<div class="t" style="left:129.50px;top:623.00px;font-size:9.5px;line-height:9.5px;color:#0052CC;font-weight:400;letter-spacing:-0.100px;transform:scaleX(0.9688);transform-origin:0 0;">ED-48</div>
<div class="t" style="left:341.30px;top:623.00px;font-size:9.5px;line-height:9.5px;color:#172B4D;font-weight:400;letter-spacing:0.054px;">Cucumber</div>
<div class="t" style="left:401.70px;top:623.00px;font-size:9.5px;line-height:9.5px;color:#0052CC;font-weight:400;letter-spacing:0.000px;">1</div>
<div class="t" style="left:453.90px;top:623.00px;font-size:9.5px;line-height:9.5px;color:#172B4D;font-weight:400;letter-spacing:0.000px;">0</div>
<div class="t" style="left:507.30px;top:623.00px;font-size:9.5px;line-height:9.5px;color:#0052CC;font-weight:400;letter-spacing:-0.100px;transform:scaleX(0.9698);transform-origin:0 0;">ED-2</div>
<div class="t" style="left:560.10px;top:609.70px;font-size:9.5px;line-height:9.5px;color:#0052CC;font-weight:400;letter-spacing:0.005px;">Jira Default</div>
<div class="t" style="left:560.10px;top:623.00px;font-size:9.5px;line-height:9.5px;color:#0052CC;font-weight:400;letter-spacing:0.268px;">Admin</div>
<div class="t" style="left:560.10px;top:635.60px;font-size:9.5px;line-height:9.5px;color:#0052CC;font-weight:400;letter-spacing:-0.050px;">Serviceaccount</div>
<div class="t" style="left:640.60px;top:623.00px;font-size:9.5px;line-height:9.5px;color:#0052CC;font-weight:400;letter-spacing:-0.028px;">Page_Configuration</div>
<div class="t" style="left:740.30px;top:623.00px;font-size:9.5px;line-height:9.5px;color:#172B4D;font-weight:400;letter-spacing:0.196px;">None</div>
<div class="t" style="left:941.60px;top:622.80px;font-size:8.6px;line-height:8.6px;color:#fff;font-weight:700;letter-spacing:-0.100px;transform:scaleX(0.9008);transform-origin:0 0;">FAIL</div>
<div class="t" style="left:76.90px;top:686.40px;font-size:9.5px;line-height:9.5px;color:#172B4D;font-weight:400;letter-spacing:0.000px;">2</div>
<div class="t" style="left:129.50px;top:686.40px;font-size:9.5px;line-height:9.5px;color:#0052CC;font-weight:400;letter-spacing:-0.100px;transform:scaleX(0.9688);transform-origin:0 0;">ED-50</div>
<div class="t" style="left:341.30px;top:686.40px;font-size:9.5px;line-height:9.5px;color:#172B4D;font-weight:400;letter-spacing:0.054px;">Cucumber</div>
<div class="t" style="left:401.70px;top:686.40px;font-size:9.5px;line-height:9.5px;color:#0052CC;font-weight:400;letter-spacing:0.000px;">1</div>
<div class="t" style="left:453.90px;top:686.40px;font-size:9.5px;line-height:9.5px;color:#172B4D;font-weight:400;letter-spacing:0.000px;">0</div>
<div class="t" style="left:507.30px;top:686.40px;font-size:9.5px;line-height:9.5px;color:#0052CC;font-weight:400;letter-spacing:-0.100px;transform:scaleX(0.9698);transform-origin:0 0;">ED-2</div>
<div class="t" style="left:560.10px;top:673.10px;font-size:9.5px;line-height:9.5px;color:#0052CC;font-weight:400;letter-spacing:0.005px;">Jira Default</div>
<div class="t" style="left:560.10px;top:686.40px;font-size:9.5px;line-height:9.5px;color:#0052CC;font-weight:400;letter-spacing:0.268px;">Admin</div>
<div class="t" style="left:560.10px;top:699.00px;font-size:9.5px;line-height:9.5px;color:#0052CC;font-weight:400;letter-spacing:-0.050px;">Serviceaccount</div>
<div class="t" style="left:640.60px;top:686.40px;font-size:9.5px;line-height:9.5px;color:#0052CC;font-weight:400;letter-spacing:-0.028px;">Page_Configuration</div>
<div class="t" style="left:740.30px;top:686.40px;font-size:9.5px;line-height:9.5px;color:#172B4D;font-weight:400;letter-spacing:0.196px;">None</div>
<div class="t" style="left:939.90px;top:686.20px;font-size:8.6px;line-height:8.6px;color:#fff;font-weight:700;letter-spacing:-0.100px;transform:scaleX(0.8814);transform-origin:0 0;">PASS</div>
<div class="t" style="left:76.90px;top:749.30px;font-size:9.5px;line-height:9.5px;color:#172B4D;font-weight:400;letter-spacing:0.000px;">3</div>
<div class="t" style="left:129.50px;top:749.30px;font-size:9.5px;line-height:9.5px;color:#0052CC;font-weight:400;letter-spacing:-0.100px;transform:scaleX(0.9688);transform-origin:0 0;">ED-49</div>
<div class="t" style="left:341.30px;top:749.30px;font-size:9.5px;line-height:9.5px;color:#172B4D;font-weight:400;letter-spacing:0.054px;">Cucumber</div>
<div class="t" style="left:401.70px;top:749.30px;font-size:9.5px;line-height:9.5px;color:#0052CC;font-weight:400;letter-spacing:0.000px;">1</div>
<div class="t" style="left:453.90px;top:749.30px;font-size:9.5px;line-height:9.5px;color:#172B4D;font-weight:400;letter-spacing:0.000px;">0</div>
<div class="t" style="left:507.30px;top:749.30px;font-size:9.5px;line-height:9.5px;color:#0052CC;font-weight:400;letter-spacing:-0.100px;transform:scaleX(0.9698);transform-origin:0 0;">ED-2</div>
<div class="t" style="left:560.10px;top:736.00px;font-size:9.5px;line-height:9.5px;color:#0052CC;font-weight:400;letter-spacing:0.005px;">Jira Default</div>
<div class="t" style="left:560.10px;top:749.30px;font-size:9.5px;line-height:9.5px;color:#0052CC;font-weight:400;letter-spacing:0.268px;">Admin</div>
<div class="t" style="left:560.10px;top:761.90px;font-size:9.5px;line-height:9.5px;color:#0052CC;font-weight:400;letter-spacing:-0.050px;">Serviceaccount</div>
<div class="t" style="left:640.60px;top:749.30px;font-size:9.5px;line-height:9.5px;color:#0052CC;font-weight:400;letter-spacing:-0.028px;">Page_Configuration</div>
<div class="t" style="left:740.30px;top:749.30px;font-size:9.5px;line-height:9.5px;color:#172B4D;font-weight:400;letter-spacing:0.196px;">None</div>
<div class="t" style="left:939.90px;top:749.10px;font-size:8.6px;line-height:8.6px;color:#fff;font-weight:700;letter-spacing:-0.100px;transform:scaleX(0.8814);transform-origin:0 0;">PASS</div>
<div class="t" style="left:76.90px;top:806.30px;font-size:9.5px;line-height:9.5px;color:#172B4D;font-weight:400;letter-spacing:0.000px;">4</div>
<div class="t" style="left:129.50px;top:806.30px;font-size:9.5px;line-height:9.5px;color:#0052CC;font-weight:400;letter-spacing:-0.100px;transform:scaleX(0.9605);transform-origin:0 0;">ED-3</div>
<div class="t" style="left:341.30px;top:806.30px;font-size:9.5px;line-height:9.5px;color:#172B4D;font-weight:400;letter-spacing:0.054px;">Cucumber</div>
<div class="t" style="left:401.70px;top:806.30px;font-size:9.5px;line-height:9.5px;color:#0052CC;font-weight:400;letter-spacing:0.000px;">1</div>
<div class="t" style="left:453.90px;top:806.30px;font-size:9.5px;line-height:9.5px;color:#172B4D;font-weight:400;letter-spacing:0.000px;">0</div>
<div class="t" style="left:507.30px;top:806.30px;font-size:9.5px;line-height:9.5px;color:#0052CC;font-weight:400;letter-spacing:-0.100px;transform:scaleX(0.9698);transform-origin:0 0;">ED-2</div>
<div class="t" style="left:560.10px;top:793.00px;font-size:9.5px;line-height:9.5px;color:#0052CC;font-weight:400;letter-spacing:0.005px;">Jira Default</div>
<div class="t" style="left:560.10px;top:806.30px;font-size:9.5px;line-height:9.5px;color:#0052CC;font-weight:400;letter-spacing:0.268px;">Admin</div>
<div class="t" style="left:560.10px;top:818.90px;font-size:9.5px;line-height:9.5px;color:#0052CC;font-weight:400;letter-spacing:-0.050px;">Serviceaccount</div>
<div class="t" style="left:640.60px;top:806.30px;font-size:9.5px;line-height:9.5px;color:#0052CC;font-weight:400;letter-spacing:-0.028px;">Page_Configuration</div>
<div class="t" style="left:740.30px;top:806.30px;font-size:9.5px;line-height:9.5px;color:#172B4D;font-weight:400;letter-spacing:0.196px;">None</div>
<div class="t" style="left:939.90px;top:806.10px;font-size:8.6px;line-height:8.6px;color:#fff;font-weight:700;letter-spacing:-0.100px;transform:scaleX(0.8814);transform-origin:0 0;">PASS</div>
<div class="t" style="left:560.10px;top:843.60px;font-size:9.5px;line-height:9.5px;color:#0052CC;font-weight:400;letter-spacing:0.005px;">Jira Default</div>
<div class="t" style="left:1119.00px;top:73.40px;font-size:10.8px;line-height:10.8px;color:#172B4D;font-weight:400;letter-spacing:0.182px;">Xporter</div>
<div class="t" style="left:1119.00px;top:114.20px;font-size:10.8px;line-height:10.8px;color:#6B778C;font-weight:400;letter-spacing:-0.100px;transform:scaleX(0.9859);transform-origin:0 0;">Template</div>
<div class="t" style="left:1235.80px;top:115.90px;font-size:10.8px;line-height:10.8px;color:#172B4D;font-weight:400;letter-spacing:-0.100px;transform:scaleX(0.9227);transform-origin:0 0;">Issue Details Excel</div>
<div class="t" style="left:1119.00px;top:143.70px;font-size:10.8px;line-height:10.8px;color:#6B778C;font-weight:400;letter-spacing:0.099px;">Output format</div>
<div class="t" style="left:1235.80px;top:145.40px;font-size:10.8px;line-height:10.8px;color:#172B4D;font-weight:400;letter-spacing:-0.100px;transform:scaleX(0.8669);transform-origin:0 0;">XLSX (Excel)</div>
<div class="t" style="left:1119.00px;top:171.80px;font-size:10.8px;line-height:10.8px;color:#6B778C;font-weight:400;letter-spacing:-0.100px;transform:scaleX(0.9724);transform-origin:0 0;">Use custom file name</div>
<div class="t" style="left:1251.50px;top:196.80px;font-size:10.8px;line-height:10.8px;color:#344563;font-weight:400;letter-spacing:-0.100px;transform:scaleX(0.9445);transform-origin:0 0;">Export</div>
<div class="t" style="left:1119.00px;top:242.20px;font-size:10.8px;line-height:10.8px;color:#172B4D;font-weight:400;letter-spacing:-0.100px;transform:scaleX(0.9602);transform-origin:0 0;">People</div>
<div class="t" style="left:1119.00px;top:264.20px;font-size:10.8px;line-height:10.8px;color:#6B778C;font-weight:400;letter-spacing:-0.100px;transform:scaleX(0.9460);transform-origin:0 0;">Assignee:</div>
<div class="t" style="left:1248.70px;top:264.20px;font-size:10.8px;line-height:10.8px;color:#172B4D;font-weight:400;letter-spacing:-0.100px;transform:scaleX(0.9696);transform-origin:0 0;">Jira Default Admin Serviceaccount</div>
<div class="t" style="left:1228.10px;top:282.80px;font-size:10.8px;line-height:10.8px;color:#0052CC;font-weight:400;letter-spacing:-0.100px;transform:scaleX(0.9770);transform-origin:0 0;">Assign to me</div>
<div class="t" style="left:1119.00px;top:304.00px;font-size:10.8px;line-height:10.8px;color:#6B778C;font-weight:400;letter-spacing:-0.100px;transform:scaleX(0.9614);transform-origin:0 0;">Reporter:</div>
<div class="t" style="left:1248.70px;top:304.00px;font-size:10.8px;line-height:10.8px;color:#172B4D;font-weight:400;letter-spacing:-0.100px;transform:scaleX(0.9696);transform-origin:0 0;">Jira Default Admin Serviceaccount</div>
<div class="t" style="left:1119.00px;top:324.10px;font-size:10.8px;line-height:10.8px;color:#6B778C;font-weight:400;letter-spacing:-0.100px;transform:scaleX(0.9420);transform-origin:0 0;">Votes:</div>
<div class="t" style="left:1228.00px;top:325.20px;font-size:8.8px;line-height:8.8px;color:#172B4D;font-weight:700;letter-spacing:0.000px;width:17.7px;text-align:center;">0</div>
<div class="t" style="left:1249.20px;top:324.10px;font-size:10.8px;line-height:10.8px;color:#0052CC;font-weight:400;letter-spacing:-0.100px;transform:scaleX(0.9758);transform-origin:0 0;">Vote for this issue</div>
<div class="t" style="left:1119.00px;top:341.30px;font-size:10.8px;line-height:10.8px;color:#6B778C;font-weight:400;letter-spacing:-0.100px;transform:scaleX(0.9452);transform-origin:0 0;">Watchers:</div>
<div class="t" style="left:1228.00px;top:342.90px;font-size:8.8px;line-height:8.8px;color:#172B4D;font-weight:700;letter-spacing:0.000px;width:17.7px;text-align:center;">1</div>
<div class="t" style="left:1249.20px;top:341.30px;font-size:10.8px;line-height:10.8px;color:#0052CC;font-weight:400;letter-spacing:-0.100px;transform:scaleX(0.9683);transform-origin:0 0;">Start watching this issue</div>
<div class="t" style="left:1119.00px;top:379.60px;font-size:10.8px;line-height:10.8px;color:#172B4D;font-weight:400;letter-spacing:-0.100px;transform:scaleX(0.9531);transform-origin:0 0;">Dates</div>
<div class="t" style="left:1119.00px;top:399.90px;font-size:10.8px;line-height:10.8px;color:#6B778C;font-weight:400;letter-spacing:-0.100px;transform:scaleX(0.9555);transform-origin:0 0;">Created:</div>
<div class="t" style="left:1228.10px;top:399.90px;font-size:10.8px;line-height:10.8px;color:#172B4D;font-weight:400;letter-spacing:-0.100px;transform:scaleX(0.9440);transform-origin:0 0;">Yesterday</div>
<div class="t" style="left:1119.00px;top:417.90px;font-size:10.8px;line-height:10.8px;color:#6B778C;font-weight:400;letter-spacing:-0.100px;transform:scaleX(0.9903);transform-origin:0 0;">Updated:</div>
<div class="t" style="left:1228.10px;top:417.90px;font-size:10.8px;line-height:10.8px;color:#172B4D;font-weight:400;letter-spacing:-0.100px;transform:scaleX(0.9440);transform-origin:0 0;">Yesterday</div>
<div class="t" style="left:1119.00px;top:435.90px;font-size:10.8px;line-height:10.8px;color:#6B778C;font-weight:400;letter-spacing:-0.100px;transform:scaleX(0.9672);transform-origin:0 0;">Begin Date:</div>
<div class="t" style="left:1228.10px;top:435.90px;font-size:10.8px;line-height:10.8px;color:#172B4D;font-weight:400;letter-spacing:-0.100px;transform:scaleX(0.9440);transform-origin:0 0;">Yesterday</div>
<div class="t" style="left:1119.00px;top:453.90px;font-size:10.8px;line-height:10.8px;color:#6B778C;font-weight:400;letter-spacing:-0.100px;transform:scaleX(0.9361);transform-origin:0 0;">End Date:</div>
<div class="t" style="left:1228.10px;top:453.90px;font-size:10.8px;line-height:10.8px;color:#172B4D;font-weight:400;letter-spacing:-0.100px;transform:scaleX(0.9440);transform-origin:0 0;">Yesterday</div>
<div class="t" style="left:1119.00px;top:491.90px;font-size:10.8px;line-height:10.8px;color:#172B4D;font-weight:400;letter-spacing:0.123px;">Agile</div>
<div class="t" style="left:1119.00px;top:510.80px;font-size:10.8px;line-height:10.8px;color:#0052CC;font-weight:400;letter-spacing:-0.100px;transform:scaleX(0.9764);transform-origin:0 0;">View on Board</div>
<div class="t" style="left:1119.00px;top:548.20px;font-size:10.8px;line-height:10.8px;color:#172B4D;font-weight:400;letter-spacing:-0.100px;transform:scaleX(0.9821);transform-origin:0 0;">HipChat discussions</div>
<div class="t" style="left:1119.00px;top:566.80px;font-size:10.8px;line-height:10.8px;color:#172B4D;font-weight:400;letter-spacing:-0.100px;transform:scaleX(0.9752);transform-origin:0 0;">Do you want to discuss this issue? Connect to HipChat.</div>
<div class="t" style="left:1127.20px;top:593.00px;font-size:10.8px;line-height:10.8px;color:#344563;font-weight:400;letter-spacing:-0.100px;transform:scaleX(0.9668);transform-origin:0 0;">Connect</div>
<div class="t" style="left:1181.80px;top:593.00px;font-size:10.8px;line-height:10.8px;color:#0052CC;font-weight:400;letter-spacing:-0.100px;transform:scaleX(0.9278);transform-origin:0 0;">Dismiss</div>
</body></html>
